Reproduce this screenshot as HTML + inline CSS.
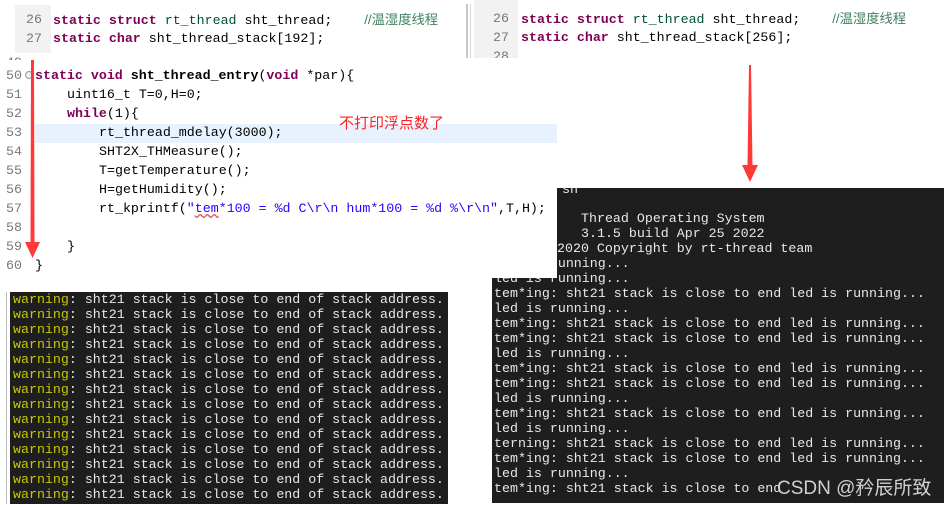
<!DOCTYPE html>
<html><head><meta charset="utf-8"><style>
*{margin:0;padding:0;box-sizing:border-box}
body{width:944px;height:505px;background:#fff;position:relative;overflow:hidden;font-family:"Liberation Mono","Noto Sans CJK SC",monospace;font-size:13.3px}
.l{position:absolute;white-space:pre;line-height:16px;height:16px}
.n{color:#787878}
.k{color:#7f0055;font-weight:bold}
.b{font-weight:bold}
.g{color:#3f7f5f;font-family:"Liberation Sans","Noto Sans CJK SC",sans-serif}
.s{color:#2a00ff}
.t{position:absolute;background:#1e1e1e;overflow:hidden}
.t .l{color:#e8e8e8}
.y{color:#c8c800}
</style></head><body>
<div style="position:absolute;left:15px;top:5px;width:36px;height:48px;background:#f2f2f2"></div>
<div class="l n" style="left:26px;top:12px">26</div>
<div class="l n" style="left:26px;top:31px">27</div>
<div class="l" style="left:53px;top:12px"><span class="k">static struct</span> <span style="color:#005032">rt_thread</span> sht_thread;    <span class="g">//温湿度线程</span></div>
<div class="l" style="left:53px;top:31px"><span class="k">static char</span> sht_thread_stack[192];</div>
<div style="position:absolute;left:466px;top:4px;width:2px;height:54px;background:#c8c8c8"></div>
<div style="position:absolute;left:470px;top:4px;width:1px;height:54px;background:#d8d8d8"></div>
<div style="position:absolute;left:474px;top:0;width:44px;height:58px;background:#f2f2f2"></div>
<div class="l n" style="left:493px;top:11px">26</div>
<div class="l n" style="left:493px;top:30px">27</div>
<div class="l n" style="left:493px;top:49px;height:9px;overflow:hidden">28</div>
<div class="l" style="left:521px;top:11px"><span class="k">static struct</span> <span style="color:#005032">rt_thread</span> sht_thread;    <span class="g">//温湿度线程</span></div>
<div class="l" style="left:521px;top:30px"><span class="k">static char</span> sht_thread_stack[256];</div>

<div class="t" style="left:492px;top:188px;width:452px;height:315px">
<div class="l" style="left:70px;top:-6px">sh</div>
<div class="l" style="left:89px;top:23px">Thread Operating System</div>
<div class="l" style="left:89px;top:38px">3.1.5 build Apr 25 2022</div>
<div class="l" style="left:65px;top:53px">2020 Copyright by rt-thread team</div>
<div class="l" style="left:2px;top:68px">led is running...</div>
<div class="l" style="left:2px;top:83px">led is running...</div>
<div class="l" style="left:2px;top:98px">tem*ing: sht21 stack is close to end led is running...</div>
<div class="l" style="left:2px;top:113px">led is running...</div>
<div class="l" style="left:2px;top:128px">tem*ing: sht21 stack is close to end led is running...</div>
<div class="l" style="left:2px;top:143px">tem*ing: sht21 stack is close to end led is running...</div>
<div class="l" style="left:2px;top:158px">led is running...</div>
<div class="l" style="left:2px;top:173px">tem*ing: sht21 stack is close to end led is running...</div>
<div class="l" style="left:2px;top:188px">tem*ing: sht21 stack is close to end led is running...</div>
<div class="l" style="left:2px;top:203px">led is running...</div>
<div class="l" style="left:2px;top:218px">tem*ing: sht21 stack is close to end led is running...</div>
<div class="l" style="left:2px;top:233px">led is running...</div>
<div class="l" style="left:2px;top:248px">terning: sht21 stack is close to end led is running...</div>
<div class="l" style="left:2px;top:263px">tem*ing: sht21 stack is close to end led is running...</div>
<div class="l" style="left:2px;top:278px">led is running...</div>
<div class="l" style="left:2px;top:293px">tem*ing: sht21 stack is close to end</div>
<div class="l" style="left:285px;top:291px;color:#d0d0d0;font-family:'Liberation Sans','Noto Sans CJK SC',sans-serif;font-size:19px;line-height:20px;height:20px">CSDN @矜辰所致</div>
</div>

<div style="position:absolute;left:0;top:60px;width:557px;height:218px;background:#fff"></div>
<div style="position:absolute;left:35px;top:124px;width:522px;height:19px;background:#e8f2fe"></div>
<div class="l n" style="left:6px;top:55px;height:5px;overflow:hidden">49</div>
<div class="l n" style="left:6px;top:68px">50</div>
<div style="position:absolute;left:25px;top:71px;width:8px;height:8px;border:1px solid #999;border-radius:50%;background:#eee"></div>
<div class="l n" style="left:6px;top:87px">51</div>
<div class="l n" style="left:6px;top:106px">52</div>
<div class="l n" style="left:6px;top:125px">53</div>
<div class="l n" style="left:6px;top:144px">54</div>
<div class="l n" style="left:6px;top:163px">55</div>
<div class="l n" style="left:6px;top:182px">56</div>
<div class="l n" style="left:6px;top:201px">57</div>
<div class="l n" style="left:6px;top:220px">58</div>
<div class="l n" style="left:6px;top:239px">59</div>
<div class="l n" style="left:6px;top:258px">60</div>
<div class="l" style="left:35px;top:68px"><span class="k">static void</span> <span class="b">sht_thread_entry</span>(<span class="k">void</span> *par){</div>
<div class="l" style="left:67px;top:87px">uint16_t T=0,H=0;</div>
<div class="l" style="left:67px;top:106px"><span class="k">while</span>(1){</div>
<div class="l" style="left:99px;top:125px">rt_thread_mdelay(3000);</div>
<div class="l" style="left:99px;top:144px">SHT2X_THMeasure();</div>
<div class="l" style="left:99px;top:163px">T=getTemperature();</div>
<div class="l" style="left:99px;top:182px">H=getHumidity();</div>
<div class="l" style="left:99px;top:201px">rt_kprintf(<span class="s">"<span style="text-decoration:underline wavy #e05050">tem</span>*100 = %d C\r\n hum*100 = %d %\r\n"</span>,T,H);</div>
<div class="l" style="left:67px;top:239px">}</div>
<div class="l" style="left:35px;top:258px">}</div>
<div class="l" style="left:339px;top:114px;color:#ff2020;font-family:'Liberation Sans','Noto Sans CJK SC',sans-serif;font-size:15px;line-height:20px;height:20px">不打印浮点数了</div>

<div style="position:absolute;left:6px;top:292px;width:1px;height:212px;background:#bbb"></div>
<div class="t" style="left:10px;top:292px;width:438px;height:212px">
<div class="l" style="left:3px;top:0px"><span class="y">warning</span>: sht21 stack is close to end of stack address.</div>
<div class="l" style="left:3px;top:15px"><span class="y">warning</span>: sht21 stack is close to end of stack address.</div>
<div class="l" style="left:3px;top:30px"><span class="y">warning</span>: sht21 stack is close to end of stack address.</div>
<div class="l" style="left:3px;top:45px"><span class="y">warning</span>: sht21 stack is close to end of stack address.</div>
<div class="l" style="left:3px;top:60px"><span class="y">warning</span>: sht21 stack is close to end of stack address.</div>
<div class="l" style="left:3px;top:75px"><span class="y">warning</span>: sht21 stack is close to end of stack address.</div>
<div class="l" style="left:3px;top:90px"><span class="y">warning</span>: sht21 stack is close to end of stack address.</div>
<div class="l" style="left:3px;top:105px"><span class="y">warning</span>: sht21 stack is close to end of stack address.</div>
<div class="l" style="left:3px;top:120px"><span class="y">warning</span>: sht21 stack is close to end of stack address.</div>
<div class="l" style="left:3px;top:135px"><span class="y">warning</span>: sht21 stack is close to end of stack address.</div>
<div class="l" style="left:3px;top:150px"><span class="y">warning</span>: sht21 stack is close to end of stack address.</div>
<div class="l" style="left:3px;top:165px"><span class="y">warning</span>: sht21 stack is close to end of stack address.</div>
<div class="l" style="left:3px;top:180px"><span class="y">warning</span>: sht21 stack is close to end of stack address.</div>
<div class="l" style="left:3px;top:195px"><span class="y">warning</span>: sht21 stack is close to end of stack address.</div>
</div>

<svg style="position:absolute;left:0;top:0" width="944" height="505">
<polygon points="31,60 34,60 34.5,242 40,242 32.5,258 25,242 30.5,242" fill="#ff3838"/>
<polygon points="749,65 751,65 752.5,165 758,165 750,182 742,165 747.5,165" fill="#ff3838"/>
</svg>
</body></html>
